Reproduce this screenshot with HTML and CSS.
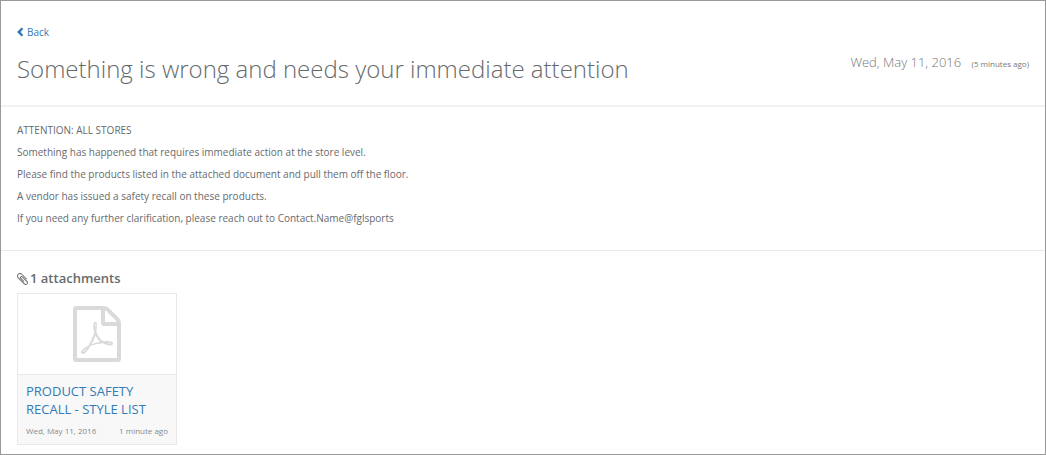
FILE: index.html
```html
<!DOCTYPE html>
<html lang="en">
<head>
<meta charset="utf-8">
<title>Urgent Notice</title>
<link rel="stylesheet" href="styles.css">
</head>
<body>
<main class="notice">
  <header class="notice-header">
    <a class="back" href="#"><svg class="back-icon" viewBox="1 0 7 10" aria-hidden="true"><path d="M5.6 .4 7.3 2 4.6 5l2.7 3-1.7 1.6L1 5z"/></svg>Back</a>
    <div class="title-row">
      <h1 class="title">Something is wrong and needs your immediate attention</h1>
      <p class="date">Wed, May 11, 2016 <small class="ago">(5 minutes ago)</small></p>
    </div>
  </header>
  <section class="message">
    <p>ATTENTION: ALL STORES</p>
    <p>Something has happened that requires immediate action at the store level.</p>
    <p>Please find the products listed in the attached document and pull them off the floor.</p>
    <p>A vendor has issued a safety recall on these products.</p>
    <p>If you need any further clarification, please reach out to Contact.Name@fglsports</p>
  </section>
  <section class="attachments">
    <h2 class="attachments-title"><svg class="clip-icon" viewBox="0 0 1408 1792" aria-hidden="true"><path transform="matrix(1 0 0 -1 0 1536)" d="M1404 151q0 -117 -79 -196t-196 -79q-135 0 -235 100l-777 776q-113 115 -113 271q0 159 110 270t269 111q158 0 273 -113l605 -606q10 -10 10 -22q0 -16 -30.500 -46.500t-46.500 -30.500q-13 0 -23 10l-606 607q-79 77 -181 77q-106 0 -179 -75t-73 -181q0 -105 76 -181l776 -777q63 -63 145 -63q64 0 106 42t42 106q0 82 -63 145l-581 581q-26 24 -60 24q-29 0 -48 -19t-19 -48q0 -32 25 -59l410 -410q10 -10 10 -22q0 -16 -31 -47t-47 -31q-12 0 -22 10l-410 410q-63 61 -63 149q0 82 57 139t139 57q88 0 149 -63l581 -581q100 -98 100 -235z"/></svg>1 attachments</h2>
    <article class="file">
      <div class="file-preview">
        <svg class="pdf-icon" viewBox="0 0 1536 1792" aria-hidden="true"><path transform="matrix(1 0 0 -1 0 1536)" d="M1468 1156q28 -28 48 -76t20 -88v-1152q0 -40 -28 -68t-68 -28h-1344q-40 0 -68 28t-28 68v1600q0 40 28 68t68 28h896q40 0 88 -20t76 -48zM1024 1400v-376h376q-10 29 -22 41l-313 313q-12 12 -41 22zM1408 -128v1024h-416q-40 0 -68 28t-28 68v416h-768v-1536h1280zM894 465q33 -26 84 -56q59 7 117 7q147 0 177 -49q16 -22 2 -52q0 -1 -1 -2l-2 -2v-1q-6 -38 -71 -38q-48 0 -115 20t-130 53q-221 -24 -392 -83q-153 -262 -242 -262q-15 0 -28 7l-24 12q-1 1 -6 5q-10 10 -6 36q9 40 56 91.500t132 96.500q14 9 23 -6q2 -2 2 -4q52 85 107 197q68 136 104 262q-24 82 -30.500 159.500t6.500 127.500q11 40 42 40h21h1q23 0 35 -15q18 -21 9 -68q-2 -6 -4 -8q1 -3 1 -8v-30q-2 -123 -14 -192q55 -164 146 -238zM318 54q52 24 137 158q-51 -40 -87.500 -84t-49.500 -74zM716 974q-15 -42 -2 -132q1 7 7 44q0 3 7 43q1 4 4 8q-1 1 -1 2q-1 2 -1 3q-1 22 -13 36q0 -1 -1 -2v-2zM592 313q135 54 284 81q-2 1 -13 9.500t-16 13.500q-76 67 -127 176q-27 -86 -83 -197q-30 -56 -45 -83zM1238 329q-24 24 -140 24q76 -28 124 -28q14 0 18 1q0 1 -2 3z"/></svg>
      </div>
      <div class="file-info">
        <a class="file-name" href="#">PRODUCT SAFETY RECALL - STYLE LIST</a>
        <p class="file-meta"><span>Wed, May 11, 2016</span><span>1 minute ago</span></p>
      </div>
    </article>
  </section>
</main>
</body>
</html>
```
FILE: styles.css
```css
* { box-sizing: border-box; }
body {
  margin: 0;
  background: #fff;
  color: #676a6c;
  font: 10px/18px "Open Sans", sans-serif;
}
h1, h2, p { margin: 0; }
a { color: #337ab7; text-decoration: none; }
.notice {
  min-height: 100vh;
  border: 1px solid #999;
}
.notice-header { padding: 22px 16px 19px; border-bottom: 2px solid #f1f1f1; }
.back-icon { width: 7px; height: 10px; margin-right: 3px; vertical-align: -1px; fill: currentColor; }
.title-row { display: flex; justify-content: space-between; }
.title { padding-top: 11px; font-size: 24px; line-height: 34px; font-weight: 300; }
.date { padding-top: 10px; color: #777; font-size: 13px; line-height: 22px; font-weight: 300; }
.ago { margin-left: 7px; font-size: 8px; font-weight: 400; }
.message { display: grid; gap: 4px; padding: 14px 16px 23px; border-bottom: 1px solid #e7eaec; }
.attachments { padding: 17px 16px 9px; }
.attachments-title { margin-bottom: 5px; font-size: 13px; line-height: 20px; font-weight: 600; }
.clip-icon { width: 11px; height: 14px; margin-right: 2px; vertical-align: -3px; fill: currentColor; }
.file { width: 160px; border: 1px solid #e7eaec; }
.file-preview { display: flex; justify-content: center; padding: 12px 0; }
.pdf-icon { width: 48px; height: 56px; fill: #dadada; }
.file-info { padding: 7px 8px; background: #f8f8f8; border-top: 1px solid #e7eaec; }
.file-name { display: block; font-size: 13px; line-height: 18px; }
.file-meta { display: flex; justify-content: space-between; padding-top: 7px; color: #888; font-size: 8px; line-height: 12px; }
```
